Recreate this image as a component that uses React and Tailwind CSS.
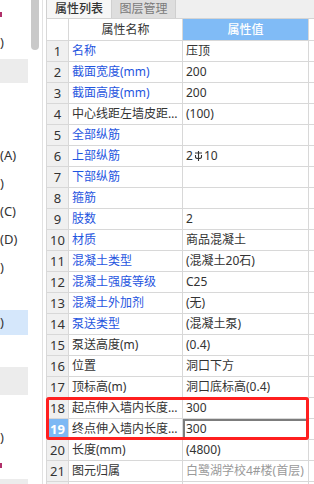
import React from 'react';

const rows = [
  { name: '名称', value: '压顶', blue: true },
  { name: '截面宽度(mm)', value: '200', blue: true },
  { name: '截面高度(mm)', value: '200', blue: true },
  { name: '中心线距左墙皮距离(mm)', value: '(100)' },
  { name: '全部纵筋', value: '', blue: true },
  { name: '上部纵筋', value: 'rebar', blue: true },
  { name: '下部纵筋', value: '', blue: true },
  { name: '箍筋', value: '', blue: true },
  { name: '肢数', value: '2', blue: true },
  { name: '材质', value: '商品混凝土', blue: true },
  { name: '混凝土类型', value: '(混凝土20石)', blue: true },
  { name: '混凝土强度等级', value: 'C25', blue: true },
  { name: '混凝土外加剂', value: '(无)', blue: true },
  { name: '泵送类型', value: '(混凝土泵)', blue: true },
  { name: '泵送高度(m)', value: '(0.4)' },
  { name: '位置', value: '洞口下方' },
  { name: '顶标高(m)', value: '洞口底标高(0.4)' },
  { name: '起点伸入墙内长度(mm)', value: '300' },
  { name: '终点伸入墙内长度(mm)', value: '300', selected: true },
  { name: '长度(mm)', value: '(4800)' },
  { name: '图元归属', value: '白鹭湖学校4#楼(首层)', muted: true },
  { name: '', value: '' },
];

// 三级钢筋符号
function RebarMark() {
  return (
    <svg width="9" height="12" viewBox="0 0 9 12" className="mx-[1px] inline-block">
      <path d="M1 3 H8 M4.5 1 V11 M1.5 5 V7 Q1.5 8.5 4.5 8.5 Q7.5 8.5 7.5 7 V5" stroke="#333" strokeWidth="1.1" fill="none" />
    </svg>
  );
}

function LeftPanel() {
  return (
    <div className="flex w-[43px] shrink-0 border-r border-[#e2e2e2] text-[13px]">
      <div className="w-[31px] shrink-0 overflow-hidden text-[#333]">
        <div className="flex h-[28px] items-center">
          <span className="h-[5px] w-[2px] bg-[#b0306a]"></span>
        </div>
        <div className="flex h-[28px] items-center">)</div>
        <div className="mt-[3px] h-[24px] w-[28px] bg-[#ececec]"></div>
        <div className="h-[58px]"></div>
        <div className="flex h-[28px] items-center">(A)</div>
        <div className="flex h-[28px] items-center">)</div>
        <div className="flex h-[28px] items-center">(C)</div>
        <div className="flex h-[28px] items-center">(D)</div>
        <div className="flex h-[28px] items-center">)</div>
        <div className="h-[29px]"></div>
        <div className="flex h-[25px] w-[28px] items-center bg-[#d5e7fb]">)</div>
        <div className="h-[32px]"></div>
        <div className="h-[28px] w-[28px] bg-[#ececec]"></div>
        <div className="h-[28px]"></div>
        <div className="flex h-[28px] items-center">)</div>
        <div className="flex h-[28px] items-center">
          <span className="h-[5px] w-[2px] bg-[#b0306a]"></span>
        </div>
        <div className="h-[6px] w-[28px] bg-[#ececec]"></div>
      </div>
      <div className="w-[8px] shrink-0">
        <div className="h-[50px] w-[8px] rounded-b-[4px] bg-[#c9c9c9]"></div>
      </div>
    </div>
  );
}

export default function App() {
  return (
    <div className="flex h-[484px] w-[314px] overflow-hidden bg-white font-['Noto_Sans','Noto_Sans_CJK_SC',sans-serif] text-[12px] leading-none">
      <LeftPanel />
      <div className="ml-[3px] flex flex-1 flex-col">
        {/* tabs */}
        <div className="flex h-[19px] shrink-0 border-b border-[#d4d4d4] bg-[#efefef]">
          <div className="flex w-[66px] items-center justify-center border-x border-[#d0d0d0] bg-[#f6f6f6] font-medium text-[#333]">
            属性列表
          </div>
          <div className="flex w-[64px] items-center justify-center border-r border-[#cfcfcf] bg-[#dedede] text-[#7a7a7a]">
            图层管理
          </div>
        </div>

        {/* table */}
        <div className="relative">
          <div className="flex h-[22px] border-b border-[#d8d8d8]">
            <div className="w-[23px] border-x border-[#d8d8d8]"></div>
            <div className="flex w-[114px] items-center justify-center border-r border-[#d8d8d8] text-[#333]">
              属性名称
            </div>
            <div className="flex w-[126px] items-center justify-center border-r border-[#d8d8d8] bg-[#80bbf6] font-medium text-white">
              属性值
            </div>
          </div>

          {rows.map((r, i) => (
            <div key={i} className="flex h-[21px] border-b border-[#d8d8d8]">
              <div
                className={
                  r.selected
                    ? 'flex w-[23px] items-center justify-center border-x border-[#d8d8d8] bg-[#7db8f4] text-[13px] font-bold text-white'
                    : 'flex w-[23px] items-center justify-center border-x border-[#d8d8d8] bg-[#f0f0f0] text-[13px] text-[#333]'
                }
              >
                {i + 1}
              </div>
              <div
                className={
                  r.blue
                    ? 'w-[114px] truncate border-r border-[#d8d8d8] pl-[3px] pr-[4px] leading-[20px] text-[#1f55e0]'
                    : 'w-[114px] truncate border-r border-[#d8d8d8] pl-[3px] pr-[4px] leading-[20px] text-[#333]'
                }
              >
                {r.name}
              </div>
              <div
                className={
                  'w-[126px] truncate border-r border-[#d8d8d8] pl-[3px] leading-[20px] ' +
                  (r.muted ? 'text-[#9a9a9a] ' : 'text-[#333] ') +
                  (r.selected ? 'shadow-[inset_0_0_0_2px_#7c7c7c]' : '')
                }
              >
                {r.value === 'rebar' ? (
                  <span className="flex h-[20px] items-center">
                    2<RebarMark />10
                  </span>
                ) : (
                  r.value
                )}
              </div>
            </div>
          ))}

          {/* red highlight box */}
          <div className="pointer-events-none absolute left-0 top-[378px] h-[43px] w-[263px] rounded-[3px] border-[3px] border-[#ff1f1f]"></div>
        </div>
      </div>
    </div>
  );
}
